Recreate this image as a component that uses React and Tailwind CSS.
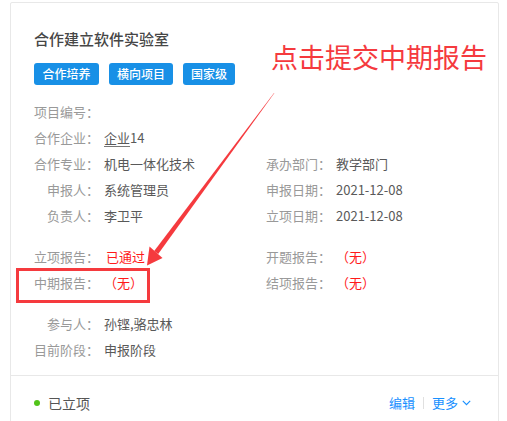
import React from "react";

const font = { fontFamily: '"Noto Sans CJK SC", "Noto Sans", sans-serif' };

function Row({ label, children, valueClass = "text-[#595959]" }) {
  return (
    <div className="flex h-[26px] items-center text-[13px] leading-[26px]">
      <span className="w-[70px] shrink-0 pr-[5px] text-right text-[#999999] whitespace-nowrap">{label}</span>
      <span className={"whitespace-nowrap " + valueClass}>{children}</span>
    </div>
  );
}

function Pair({ left, right }) {
  return (
    <div className="flex">
      <div className="w-[232px] shrink-0">{left}</div>
      <div className="flex-1">{right}</div>
    </div>
  );
}

export default function App() {
  return (
    <div className="relative h-[421px] w-[507px] overflow-hidden bg-white" style={font}>
      <div className="ml-[10px] mt-[2px] w-[489px] rounded-[2px] border border-[#e8e8e8] bg-white">
        <div className="px-[23px] pt-[24px] pb-[12px]">
          <div className="text-[15px] font-medium leading-[24px] text-[#464646]">合作建立软件实验室</div>
          <div className="mt-[12px] flex gap-[10px]">
            <span className="flex h-[22px] items-center rounded-[3px] bg-[#1890e6] px-[8.5px] text-[12px] font-medium text-white">合作培养</span>
            <span className="flex h-[22px] items-center rounded-[3px] bg-[#1890e6] px-[8px] text-[12px] font-medium text-white">横向项目</span>
            <span className="flex h-[22px] items-center rounded-[3px] bg-[#1890e6] px-[8px] text-[12px] font-medium text-white">国家级</span>
          </div>
          <div className="mt-[14px]">
            <Row label="项目编号：" />
            <Row label="合作企业：">
              <span className="underline decoration-[#777] underline-offset-[3px]">企业</span>14
            </Row>
            <Pair left={<Row label="合作专业：">机电一体化技术</Row>} right={<Row label="承办部门：">教学部门</Row>} />
            <Pair left={<Row label="申报人：">系统管理员</Row>} right={<Row label="申报日期：">2021-12-08</Row>} />
            <Pair left={<Row label="负责人：">李卫平</Row>} right={<Row label="立项日期：">2021-12-08</Row>} />
          </div>
          <div className="mt-[15px]">
            <Pair
              left={<Row label="立项报告：" valueClass="text-[#ff1a1a]"><span className="ml-[2px]">已通过</span></Row>}
              right={<Row label="开题报告：" valueClass="text-[#ff1a1a]">（无）</Row>}
            />
            <Pair
              left={<Row label="中期报告：" valueClass="text-[#ff1a1a]">（无）</Row>}
              right={<Row label="结项报告：" valueClass="text-[#ff1a1a]">（无）</Row>}
            />
          </div>
          <div className="mt-[15px]">
            <Row label="参与人：">孙铿,骆忠林</Row>
            <Row label="目前阶段：">申报阶段</Row>
          </div>
        </div>
        <div className="flex items-center justify-between border-t border-[#e8e8e8] pl-[23px] pr-[27px] py-[16px]">
          <div className="flex items-center gap-[8px] text-[14px] leading-[22px] text-[#555555]">
            <span className="h-[6px] w-[6px] rounded-full bg-[#52c41a]" />
            <span>已立项</span>
          </div>
          <div className="flex items-center text-[13px] leading-[22px] text-[#1890ff]">
            <span>编辑</span>
            <span className="mx-[8px] h-[12px] w-px bg-[#e0e0e0]" />
            <span>更多</span>
            <svg className="ml-[4px]" width="9" height="6" viewBox="0 0 9 6" fill="none">
              <path d="M0.8 0.8 L4.5 4.7 L8.2 0.8" stroke="#1890ff" strokeWidth="1.1" />
            </svg>
          </div>
        </div>
      </div>

      {/* annotation overlays */}
      <div className="absolute left-[271px] top-[43px] whitespace-nowrap text-[27px] leading-[27px] text-[#f53a3e]">点击提交中期报告</div>
      <div className="absolute left-[16px] top-[268px] h-[35px] w-[134px] border-[3px] border-[#f53a3e]" />
      <svg className="absolute left-0 top-0" width="507" height="421" viewBox="0 0 507 421">
        <polygon points="274.4,93.1 274.0,92.9 154.2,251.0 158.2,254.0" fill="#f53a3e" />
        <polygon points="147,265.5 149.5,246.5 162.5,258" fill="#f53a3e" />
      </svg>
    </div>
  );
}
